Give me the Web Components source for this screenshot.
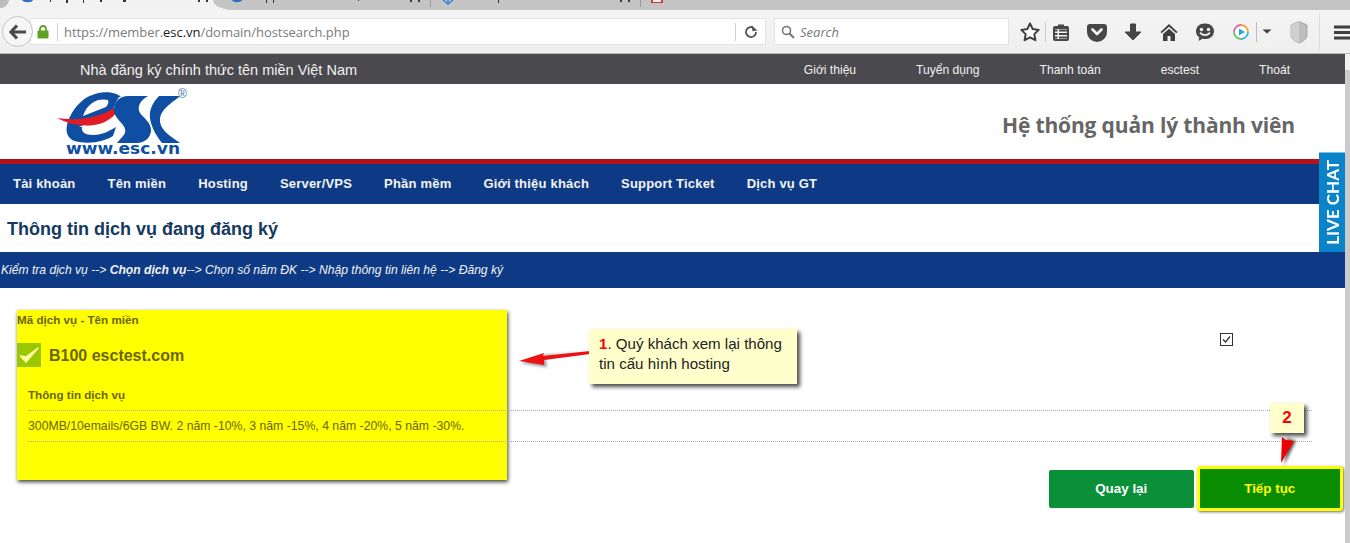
<!DOCTYPE html>
<html lang="vi">
<head>
<meta charset="utf-8">
<title>ESC</title>
<style>
html,body{margin:0;padding:0;background:#fff;overflow:hidden;height:543px;font-family:"Liberation Sans",Arial,sans-serif}
.viewport{display:flex;position:relative;width:1350px;height:489px}
.page{width:1345px;display:block}
.track{width:5px;background:linear-gradient(#f0f0f0 0 16px,#cbcbcb 16px)}
</style>
</head>
<body>
<browser-chrome></browser-chrome>
<div class="viewport">
  <div class="page">
    <esc-topbar></esc-topbar>
    <esc-header></esc-header>
    <esc-nav></esc-nav>
    <page-title>Thông tin dịch vụ đang đăng ký</page-title>
    <step-bar></step-bar>
    <service-panel></service-panel>
  </div>
  <div class="track"></div>
  <live-chat></live-chat>
  <note-layer></note-layer>
</div>
<script>
function def(name, html){
  customElements.define(name, class extends HTMLElement{
    constructor(){super();this.attachShadow({mode:'open'}).innerHTML=html;}
  });
}
def('browser-chrome',`<style>
:host{display:block;width:1350px;height:54px;background:#f1f1f1;font-family:"Open Sans","Noto Sans",sans-serif}
.tabs{height:10px;background:#c4c4c4;position:relative;overflow:hidden}
.tabs svg{display:block}
.bar{height:43px;border-bottom:1px solid #b9b9b9;display:flex;align-items:center;padding-left:2px;background:linear-gradient(#f4f4f4,#efefef)}
.back{width:31px;height:31px;box-sizing:border-box;border:1px solid #c6c6c6;border-radius:50%;background:#f6f6f6;display:flex;align-items:center;justify-content:center;position:relative;z-index:1;flex:none}
.url{width:736px;height:27px;margin-left:-3px;box-sizing:border-box;background:#fff;border:1px solid #e3e3e3;display:flex;align-items:center;font-size:13px;letter-spacing:-.04px;color:#7b7b7b;flex:none}
.lock{margin-left:6px;flex:none}
.div{width:1px;height:18px;background:#cfcfcf;flex:none}
.url .div.a{margin-left:8px;margin-right:6px}
.url b{font-weight:400;color:#1a1a1a}
.addr{flex:1;white-space:nowrap}
.reload{width:29px;display:flex;justify-content:center;flex:none}
.search{width:235px;height:27px;margin-left:8px;box-sizing:border-box;background:#fff;border:1px solid #e3e3e3;display:flex;align-items:center;font-size:13px;font-style:italic;color:#777;flex:none}
.search svg{margin:0 5px 0 6px}
svg.i{flex:none;display:block}
.sp{flex:none}
</style>
<div class="tabs"><svg width="1350" height="10" viewBox="0 0 1350 10">
<path d="M0 10V8C4 8 7 6 9 1V0H213V1C215 6 219 8 230 10Z" fill="#f2f2f2"/>
<path d="M0 0H9C7 6 4 8 0 8Z" fill="#bdbdbd"/>
<path d="M22 0h11c-1 3-9 3-11 0ZM232 0h10c-1 3-9 3-10 0Z" fill="#2a6fc0"/>
<path d="M443 0l5 4 5-4M448 0v3" stroke="#3c83d6" stroke-width="1.5" fill="none"/>
<path d="M651 0h12v3h-12z" fill="#d23b3b"/><path d="M653 0h8v2h-8z" fill="#f4f4f4"/>
<path d="M430.500 0v7M640.500 0v7" stroke="#9a9a9a"/>
<g fill="#333"><rect x="50" y="0" width="1" height="2"/><rect x="66" y="0" width="2" height="3"/><rect x="83" y="0" width="1" height="3"/><rect x="100" y="0" width="2" height="2"/><rect x="123" y="0" width="3" height="2"/><rect x="198" y="0" width="2" height="2"/><rect x="206" y="0" width="2" height="2"/>
<rect x="266" y="0" width="1" height="3"/><rect x="273" y="0" width="1" height="3"/><rect x="358" y="0" width="1" height="1"/><rect x="410" y="0" width="2" height="2"/><rect x="418" y="0" width="2" height="2"/><rect x="498" y="0" width="1" height="3"/><rect x="620" y="0" width="2" height="2"/><rect x="628" y="0" width="2" height="2"/></g>
</svg></div>
<div class="bar">
 <div class="back"><svg width="18" height="16" viewBox="0 0 18 16"><path d="M8 1.500 2 8l6 6.500M2.500 8H17" fill="none" stroke="#4a4a4a" stroke-width="3.200"/></svg></div>
 <div class="url">
  <svg class="lock" width="12" height="14" viewBox="0 0 12 14"><path d="M3 6V4a3 3 0 0 1 6 0v2" fill="none" stroke="#5ca11f" stroke-width="1.800"/><rect x="0.500" y="5.500" width="11" height="8" rx="1" fill="#5ca11f"/></svg>
  <span class="div a"></span>
  <span class="addr">https://member.<b>esc.vn</b>/domain/hostsearch.php</span>
  <span class="div"></span>
  <span class="reload"><svg width="14" height="14" viewBox="0 0 14 14"><path d="M12 7A5 5 0 1 1 9.500 2.700" fill="none" stroke="#555" stroke-width="1.800"/><path d="M8 0v6h5z" fill="#555" transform="rotate(-10 10 3)"/></svg></span>
 </div>
 <div class="search">
  <svg width="14" height="14" viewBox="0 0 14 14"><circle cx="5.500" cy="5.500" r="4" fill="none" stroke="#777" stroke-width="1.600"/><path d="M8.500 8.500 13 13" stroke="#777" stroke-width="2"/></svg>
  <span>Search</span>
 </div>
 <span class="sp" style="width:9px"></span>
 <svg class="i" width="24" height="24" viewBox="0 0 24 24"><path d="M12 3.500l2.700 5.600 6 .8-4.400 4.200 1.100 6.100L12 17.300l-5.400 2.900 1.100-6.100L3.300 9.900l6-.8z" fill="#fff" stroke="#3f3f3f" stroke-width="2" stroke-linejoin="round"/></svg>
 <span class="div" style="margin-left:3px;height:20px"></span>
 <svg class="i" style="margin-left:3px" width="24" height="24" viewBox="0 0 24 24"><path d="M6 6h3V4.500h6V6h3a2 2 0 0 1 2 2v11a2 2 0 0 1-2 2H6a2 2 0 0 1-2-2V8a2 2 0 0 1 2-2Z" fill="#474747"/><path d="M6 9h12v10H6z" fill="#f4f4f4"/><path d="M6 10.500h2.500M10 10.500h8M6 14h2.500M10 14h8M6 17.500h2.500M10 17.500h8" stroke="#474747" stroke-width="1.800"/></svg>
 <svg class="i" style="margin-left:12px" width="24" height="24" viewBox="0 0 24 24"><path d="M5 4h14a3 3 0 0 1 3 3v5a10 10 0 0 1-20 0V7a3 3 0 0 1 3-3Z" fill="#474747"/><path d="M7.500 9.500 12 14l4.500-4.500" fill="none" stroke="#f4f4f4" stroke-width="2.600" stroke-linecap="round" stroke-linejoin="round"/></svg>
 <svg class="i" style="margin-left:12px" width="24" height="24" viewBox="0 0 24 24"><path d="M9.500 4h5v8H20l-8 8-8-8h5.500z" fill="#474747" stroke="#474747" stroke-linejoin="round"/></svg>
 <svg class="i" style="margin-left:12px" width="24" height="24" viewBox="0 0 24 24"><path d="M12 4 3.500 12l1.200 1.300L12 6.800l7.300 6.500 1.200-1.300z" fill="#3f3f3f"/><path d="M12 8.800 6 14v7h4.500v-5h3v5H18v-7z" fill="#3f3f3f"/></svg>
 <svg class="i" style="margin-left:12px" width="24" height="24" viewBox="0 0 24 24"><path d="M12 3.500c5.500 0 9 3.300 9 7.700s-3.500 7.800-9 7.800c-1 0-1.800-.1-2.600-.3L5.500 21l.8-3.600C4 16 3 13.800 3 11.200c0-4.400 3.500-7.700 9-7.700Z" fill="#474747"/><circle cx="8.500" cy="9.500" r="1.700" fill="#f4f4f4"/><circle cx="15.500" cy="9.500" r="1.700" fill="#f4f4f4"/><path d="M7.500 13.200c2.500 2.600 6.500 2.600 9 0" fill="none" stroke="#f4f4f4" stroke-width="1.800" stroke-linecap="round"/></svg>
 <svg class="i" style="margin-left:12px" width="24" height="24" viewBox="0 0 24 24"><circle cx="12" cy="12" r="6" fill="#fff"/><path d="M12 5a7 7 0 0 1 7 7" fill="none" stroke="#f2a73a" stroke-width="1.800"/><path d="M19 12a7 7 0 0 1-7 7" fill="none" stroke="#39b7e8" stroke-width="1.800"/><path d="M12 19a7 7 0 0 1-7-7" fill="none" stroke="#6dc35a" stroke-width="1.800"/><path d="M5 12a7 7 0 0 1 7-7" fill="none" stroke="#e0669c" stroke-width="1.800"/><path d="M10 8.500 16 12l-6 3.500z" fill="#29a7e1"/></svg>
 <span class="div" style="margin-left:3px;height:20px;background:#bdbdbd"></span>
 <svg class="i" style="margin-left:2px" width="16" height="24" viewBox="0 0 16 24"><path d="M3.500 9.500h9L8 13.500z" fill="#3f3f3f"/></svg>
 <svg class="i" style="margin-left:12px" width="24" height="24" viewBox="0 0 24 24"><path d="M12 1.500 20 5v10c0 4-4 6.500-8 8-4-1.500-8-4-8-8V5z" fill="#bdbdbd" stroke="#a8a8a8"/><path d="M12 1.500 4 5v10c0 4 4 6.500 8 8z" fill="#cfcfcf"/></svg>
 <span class="div" style="margin-left:8px;height:36px;background:#dcdcdc"></span>
 <svg class="i" style="margin-left:13px" width="17" height="24" viewBox="0 0 17 24"><path d="M1 7h16M1 12.500h16M1 18h16" stroke="#3f3f3f" stroke-width="3" fill="none"/></svg>
</div>`);

def('esc-topbar',`<style>
:host{display:flex;height:30px;background:#4a494e;color:#f1f1f1;align-items:center;padding-left:80px;box-sizing:border-box;font-family:"Liberation Sans",Arial,sans-serif}
.slogan{font-size:14.5px;white-space:nowrap;padding-top:1px}
nav{margin-left:auto;display:flex;gap:60px;font-size:12.1px;padding-right:55px;padding-top:1px}
a{color:inherit;text-decoration:none;white-space:nowrap}
</style>
<span class="slogan">Nhà đăng ký chính thức tên miền Việt Nam</span>
<nav><a>Giới thiệu</a><a>Tuyển dụng</a><a>Thanh toán</a><a>esctest</a><a>Thoát</a></nav>`);

def('esc-header',`<style>
:host{display:flex;height:75px;background:#fff;align-items:center;justify-content:space-between;padding:0 50px 0 56px;box-sizing:border-box}
svg{display:block;width:132px;height:75px}
h1{margin:6px 0 0;font:700 21px "Open Sans","Noto Sans",sans-serif;letter-spacing:-.15px;color:#666;white-space:nowrap}
</style>
<svg viewBox="56 84 132 75">
 <path d="M121 97C116 92 104 91 95 94 80 98 70 113 67 125c-2 9 2 16 12 17 14 2 26-1 34-6l3-9c-8 5-15 8-23 8-8 0-12-3-11-8l-3 0 33-15c2-4 3-9 7-15Z" fill="#0e4ea3"/>
 <path d="M108 100c-8-2-16 1-21 8-2 3-3 5-4 8l23-9c2-2 3-5 2-7Z" fill="#fff"/>
 <path d="M57 118c20 3 45 1 64-15-2 10-12 20-27 22-14 2-27-2-37-7Z" fill="#e31b23"/>
 <path d="M148 96h-20c-8 0-13 5-14 12-1 7 5 12 9 17 3 4 3 8 0 11l-6 7h21c8-1 13-6 13-13 0-7-7-12-11-17-3-5-1-12 8-17Z" fill="#0e4ea3"/>
 <path d="M180 96h-21C152 103 149 111 150 118 151 127 157 137 162 143h18C172 137 159 130 160 119 161 108 175 101 180 96Z" fill="#0e4ea3"/>
 <text x="66" y="154" font-family="DejaVu Sans" font-weight="700" font-size="16" fill="#0e4ea3" textLength="114" lengthAdjust="spacingAndGlyphs">www.esc.vn</text>
 <text x="178" y="98" font-family="Liberation Sans" font-size="12" fill="#3b6fb5">®</text>
</svg>
<h1>Hệ thống quản lý thành viên</h1>`);

def('esc-nav',`<style>
:host{display:flex;height:45px;box-sizing:border-box;border-top:5px solid #b5121b;background:#0e3a85;color:#f4f4f4;align-items:center;padding:0 0 2px 13px;gap:32px;font:700 13px "Liberation Sans",Arial,sans-serif;letter-spacing:.2px}
a{white-space:nowrap}
</style>
<a>Tài khoản</a><a>Tên miền</a><a>Hosting</a><a>Server/VPS</a><a>Phần mềm</a><a>Giới thiệu khách</a><a>Support Ticket</a><a>Dịch vụ GT</a>`);

def('page-title',`<style>
:host{display:flex;height:48px;align-items:center;padding:2px 0 0 7px;box-sizing:border-box;background:#fff;color:#143a5f;font:700 18px "Liberation Sans",Arial,sans-serif;white-space:nowrap}
</style><slot></slot>`);

def('step-bar',`<style>
:host{display:flex;height:36px;align-items:center;padding-left:1px;box-sizing:border-box;background:#0e3a85;color:#f2f2f2;font:italic 12.12px "Liberation Sans",Arial,sans-serif;white-space:pre}
b{font-weight:700}
</style><span>Kiểm tra dịch vụ --&gt; <b>Chọn dịch vụ</b>--&gt; Chọn số năm ĐK --&gt; Nhập thông tin liên hệ --&gt; Đăng ký</span>`);

def('service-card',`<style>
:host{display:block;width:490px;height:170px;flex:none;background:#ffff00;box-shadow:1px 2px 4px rgba(0,0,0,.75);color:#6b6500;font-family:"Liberation Sans",Arial,sans-serif;box-sizing:border-box;padding-top:2px;position:relative}
.lbl{font-weight:700;font-size:11.65px;line-height:15px}
.pick{display:flex;align-items:center;gap:8px;margin-top:16px;height:24px;font-weight:700;font-size:16px}
.pick span:last-child{padding-top:2px}
.tick{width:24px;height:24px;background:#99c700;display:flex;align-items:center;justify-content:center}
.head{margin:20px 0 0 11px;height:23px}
.row{width:1284px;margin-left:11px;border-top:1px dotted #a8a8a8;height:30px;display:flex;align-items:center;font-size:12.25px}
.row.end{height:0}
</style>
<div class="lbl">Mã dịch vụ - Tên miền</div>
<div class="pick"><span class="tick"><svg width="20" height="18" viewBox="0 0 20 18"><path d="M1.500 10 7 16 19 2 7 11z" fill="#ffffa0" stroke="#ffffa0" stroke-width="1.500" stroke-linejoin="round"/></svg></span><span>B100 esctest.com</span></div>
<div class="lbl head">Thông tin dịch vụ</div>
<div class="row">300MB/10emails/6GB BW. 2 năm -10%, 3 năm -15%, 4 năm -20%, 5 năm -30%.</div>
<div class="row end"></div>`);

def('action-button',`<style>
:host{display:flex;align-items:center;justify-content:center;box-sizing:border-box;width:145px;height:38px;border-radius:2px;background:#0a9038;color:#fff;font:700 13.4px "Liberation Sans",Arial,sans-serif;white-space:nowrap}
:host([primary]){width:147px;height:45px;background:#0a8c00;color:#ffff00;border:3px solid #ffff00;border-radius:3px;box-shadow:1px 1px 3px rgba(0,0,0,.6)}
</style><slot></slot>`);

def('service-panel',`<style>
:host{display:flex;align-items:flex-start;padding:22px 2px 0 17px;box-sizing:border-box;height:223px}
.side{margin-left:auto;width:294px;height:201px;display:flex;flex-direction:column}
.check{margin:23px 0 0 171px;width:13px;height:13px;box-sizing:border-box;border:1px solid #333;background:#fff;display:flex}
.acts{margin-top:auto;display:flex;align-items:center;gap:3px}
</style>
<service-card></service-card>
<div class="side">
 <span class="check"><svg width="11" height="11" viewBox="0 0 11 11"><path d="M2 5.500 4.500 8 9 2.500" fill="none" stroke="#333" stroke-width="1.300"/></svg></span>
 <div class="acts"><action-button>Quay lại</action-button><action-button primary>Tiếp tục</action-button></div>
</div>`);

def('live-chat',`<style>
:host{position:absolute;left:1319px;top:98px;width:26px;height:100px;box-sizing:border-box;background:#0a83c8;border-top:1px solid #7cc0e6;color:#fff;display:flex;align-items:center;justify-content:center;font:700 17px "Lato","Open Sans",sans-serif}
span{writing-mode:vertical-rl;transform:rotate(180deg);white-space:nowrap}
</style><span>LIVE CHAT</span>`);

def('callout-note',`<style>
:host{position:absolute;display:block;box-sizing:border-box;background:#ffffcc;box-shadow:3px 3px 4px rgba(0,0,0,.7);color:#222;font:15.1px/19.5px "Liberation Sans",Arial,sans-serif}
</style><slot></slot>`);

def('note-layer',`<style>
:host{position:absolute;left:0;top:0;width:1350px;height:489px;display:block;pointer-events:none}
callout-note.one{left:589px;top:275px;width:208px;height:55px;padding:5px 10px}
callout-note.two{left:1270px;top:349px;width:34px;height:30px;display:flex;align-items:center;justify-content:center;font-size:17px}
svg{position:absolute;left:0;top:0;overflow:visible}
</style>
<svg width="1350" height="489" viewBox="0 54 1350 489">
 <defs><filter id="s" x="-30%" y="-60%" width="170%" height="220%"><feGaussianBlur stdDeviation="1.500"/></filter></defs>
 <path d="M521 363l24-8 46-2-46 5 2 9z" fill="#333" opacity=".55" filter="url(#s)"/>
 <path d="M519 361 544 353 543 356 590 351 590 354 544 360 544 365Z" fill="#ee1111"/>
 <path d="M1284 465l3-27 9 3z" fill="#222" opacity=".75" filter="url(#s)"/>
 <path d="M1281 463 1282 437 1286 440 1294 441Z" fill="#ee0000"/>
</svg>
<callout-note class="one"><b style="color:#f00">1</b>. Quý khách xem lại thông tin cấu hình hosting</callout-note>
<callout-note class="two"><b style="color:#f00">2</b></callout-note>`);
</script>
</body>
</html>
